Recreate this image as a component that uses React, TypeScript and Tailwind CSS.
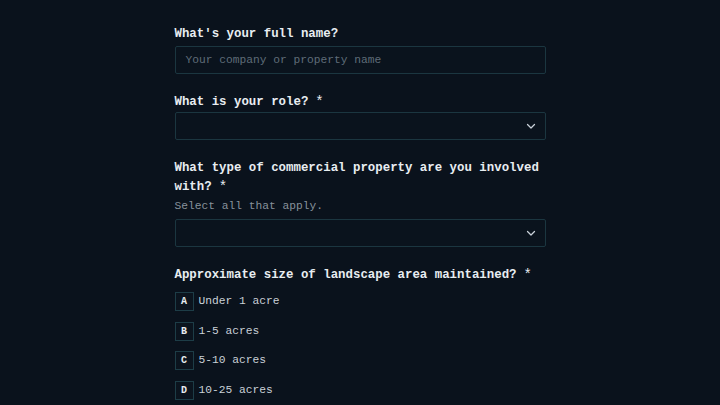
import React from "react";

const font = { fontFamily: '"Liberation Mono", "DejaVu Sans Mono", monospace' };

function Chevron() {
  return (
    <svg width="12" height="12" viewBox="0 0 24 24" fill="none" stroke="#c9d1d9" strokeWidth="2.5" strokeLinecap="round" strokeLinejoin="round">
      <path d="M5 9l7 7 7-7" />
    </svg>
  );
}

function Label({ children, star }: { children: React.ReactNode; star?: boolean }) {
  return (
    <div className="text-[12.4px] font-bold leading-[19px] text-[#e8edf1]">
      {children}
      {star && <span className="ml-[7px] inline-block align-top text-[14px] font-normal leading-[19px]">*</span>}
    </div>
  );
}

function Select({ className = "" }: { className?: string }) {
  return (
    <div className={`flex h-[28px] items-center justify-end rounded-[2px] border border-[#1b3640] bg-[#0a131d] pr-[8px] ${className}`}>
      <Chevron />
    </div>
  );
}

const options = [
  ["A", "Under 1 acre"],
  ["B", "1-5 acres"],
  ["C", "5-10 acres"],
  ["D", "10-25 acres"],
];

export default function App() {
  return (
    <div className="min-h-[405px] w-full bg-[#0a121c]" style={font}>
      <div className="mx-auto flex w-[371px] flex-col pt-[25px]">
        <Label>What's your full name?</Label>
        <div className="mt-[2px] flex h-[28px] items-center rounded-[2px] border border-[#1b3640] bg-[#0a131d] px-[10px] text-[11.25px] text-[#5f6c78]">
          Your company or property name
        </div>

        <div className="mt-[19px]">
          <Label star>What is your role?</Label>
        </div>
        <Select className="mt-0" />

        <div className="mt-[19px]">
          <Label star>What type of commercial property are you involved with?</Label>
        </div>
        <div className="mt-[1px] text-[11.25px] leading-[16px] text-[#87919b]">Select all that apply.</div>
        <Select className="mt-[5px]" />

        <div className="mt-[19px]">
          <Label star>Approximate size of landscape area maintained?</Label>
        </div>
        <div className="mt-[7px] flex flex-col gap-[10.5px]">
          {options.map(([k, t]) => (
            <div key={k} className="flex h-[19px] items-center">
              <div className="flex h-[19px] w-[19px] items-center justify-center border border-[#1d3d47] bg-[#0b141e] text-[10px] font-bold text-[#e8edf1]">
                {k}
              </div>
              <span className="ml-[5px] text-[11.25px] text-[#c9d0d7]">{t}</span>
            </div>
          ))}
        </div>
      </div>
    </div>
  );
}
